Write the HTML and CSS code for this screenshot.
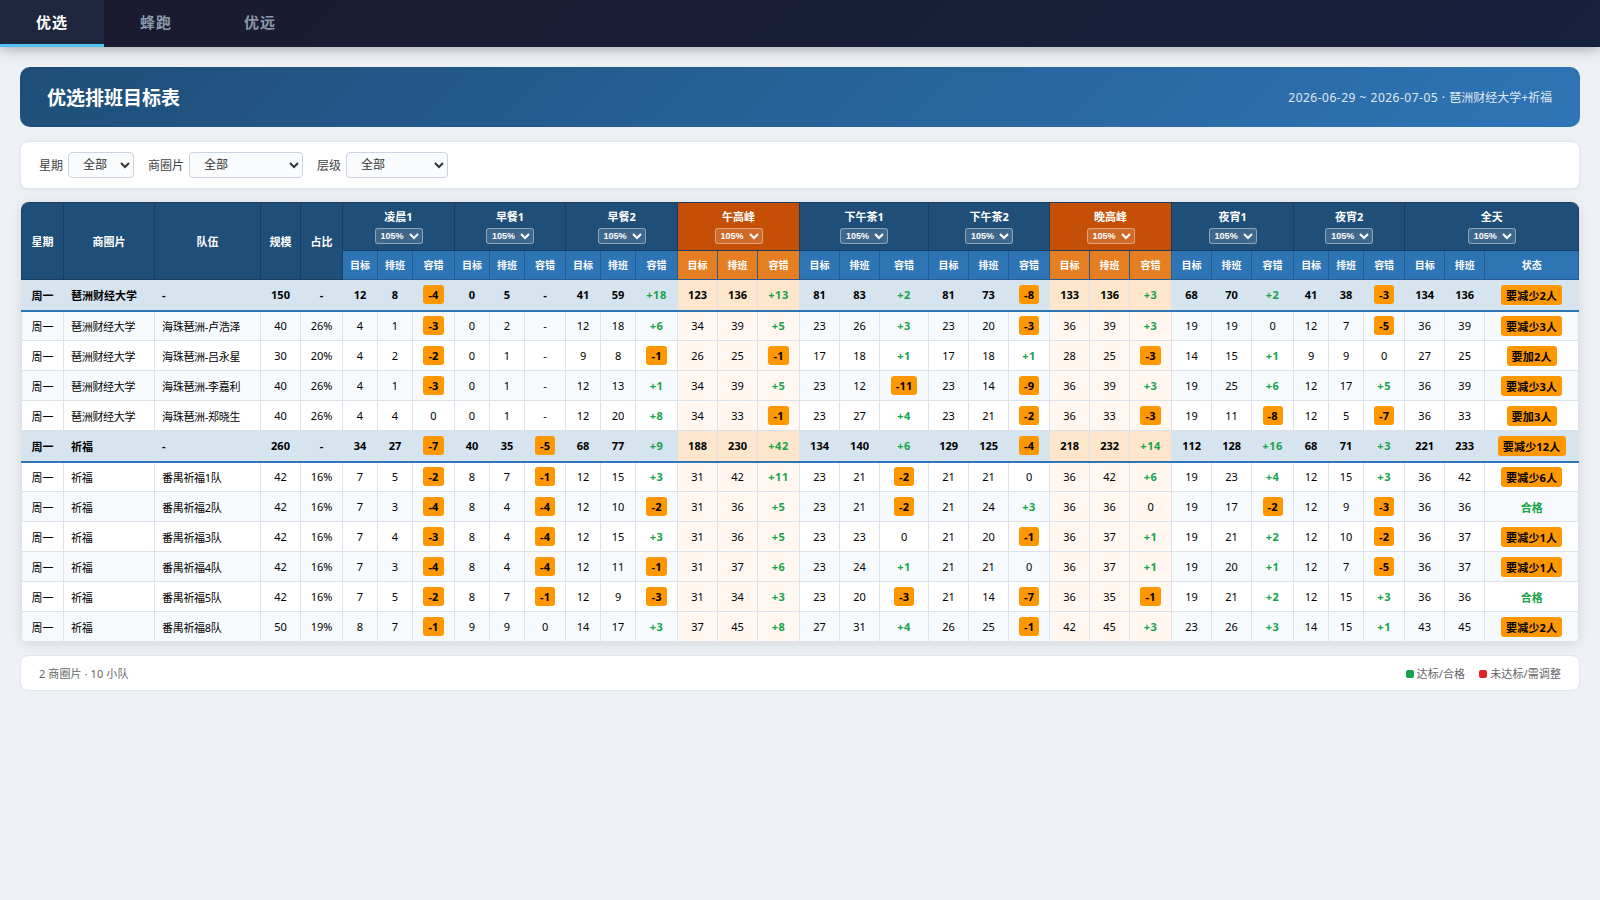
FILE: index.html
```html
<!DOCTYPE html>
<html lang="zh-CN">
<head>
    <meta charset="UTF-8">
    <meta name="viewport" content="width=device-width, initial-scale=1.0">
    <title>优选排班目标表</title>
    <link rel="stylesheet" href="styles.css">
</head>
<body>
    <nav class="tabs">
        <button class="tab active">优选</button>
        <button class="tab">蜂跑</button>
        <button class="tab">优远</button>
    </nav>

    <main class="page">
        <header class="header">
            <h1>优选排班目标表</h1>
            <div class="meta"><span class="dates">2026-06-29 ~ 2026-07-05 · </span>琶洲财经大学+祈福</div>
        </header>

        <div class="filters">
            <label>星期</label>
            <select class="f-day"><option>全部</option></select>
            <label>商圈片</label>
            <select class="f-area"><option>全部</option></select>
            <label>层级</label>
            <select class="f-level"><option>全部</option></select>
        </div>

        <div class="table-wrap">
            <table>
                <colgroup>
                    <col class="w42"><col class="w91"><col class="w106"><col class="w40"><col class="w42">
                    <col class="w35"><col class="w35"><col class="w42">
                    <col class="w35"><col class="w35"><col class="w41">
                    <col class="w35"><col class="w35"><col class="w42">
                    <col class="w40"><col class="w40"><col class="w42">
                    <col class="w40"><col class="w40"><col class="w49">
                    <col class="w40"><col class="w40"><col class="w41">
                    <col class="w40"><col class="w40"><col class="w42">
                    <col class="w40"><col class="w40"><col class="w42">
                    <col class="w35"><col class="w35"><col class="w41">
                    <col class="w40"><col class="w40"><col class="w94">
                </colgroup>
                <thead id="thead"></thead>
                <tbody id="tbody"></tbody>
            </table>
        </div>

        <footer class="footer">
            <span>2 商圈片 · 10 小队</span>
            <div class="legend">
                <span><i class="dot green"></i>达标/合格</span>
                <span><i class="dot red"></i>未达标/需调整</span>
            </div>
        </footer>
    </main>

    <script>
        const periods = ['凌晨1', '早餐1', '早餐2', '午高峰', '下午茶1', '下午茶2', '晚高峰', '夜宵1', '夜宵2', '全天'];
        const peaks = [3, 6];

        // 商圈片 | 队伍 | 规模 | 占比 | 各时段 目标 排班 容错
        const rows = [
            '琶洲财经大学|-|150|-|12 8 -4|0 5 -|41 59 +18|123 136 +13|81 83 +2|81 73 -8|133 136 +3|68 70 +2|41 38 -3|134 136 要减少2人',
            '琶洲财经大学|海珠琶洲-卢浩泽|40|26%|4 1 -3|0 2 -|12 18 +6|34 39 +5|23 26 +3|23 20 -3|36 39 +3|19 19 0|12 7 -5|36 39 要减少3人',
            '琶洲财经大学|海珠琶洲-吕永星|30|20%|4 2 -2|0 1 -|9 8 -1|26 25 -1|17 18 +1|17 18 +1|28 25 -3|14 15 +1|9 9 0|27 25 要加2人',
            '琶洲财经大学|海珠琶洲-李嘉利|40|26%|4 1 -3|0 1 -|12 13 +1|34 39 +5|23 12 -11|23 14 -9|36 39 +3|19 25 +6|12 17 +5|36 39 要减少3人',
            '琶洲财经大学|海珠琶洲-郑晓生|40|26%|4 4 0|0 1 -|12 20 +8|34 33 -1|23 27 +4|23 21 -2|36 33 -3|19 11 -8|12 5 -7|36 33 要加3人',
            '祈福|-|260|-|34 27 -7|40 35 -5|68 77 +9|188 230 +42|134 140 +6|129 125 -4|218 232 +14|112 128 +16|68 71 +3|221 233 要减少12人',
            '祈福|番禺祈福1队|42|16%|7 5 -2|8 7 -1|12 15 +3|31 42 +11|23 21 -2|21 21 0|36 42 +6|19 23 +4|12 15 +3|36 42 要减少6人',
            '祈福|番禺祈福2队|42|16%|7 3 -4|8 4 -4|12 10 -2|31 36 +5|23 21 -2|21 24 +3|36 36 0|19 17 -2|12 9 -3|36 36 合格',
            '祈福|番禺祈福3队|42|16%|7 4 -3|8 4 -4|12 15 +3|31 36 +5|23 23 0|21 20 -1|36 37 +1|19 21 +2|12 10 -2|36 37 要减少1人',
            '祈福|番禺祈福4队|42|16%|7 3 -4|8 4 -4|12 11 -1|31 37 +6|23 24 +1|21 21 0|36 37 +1|19 20 +1|12 7 -5|36 37 要减少1人',
            '祈福|番禺祈福5队|42|16%|7 5 -2|8 7 -1|12 9 -3|31 34 +3|23 20 -3|21 14 -7|36 35 -1|19 21 +2|12 15 +3|36 36 合格',
            '祈福|番禺祈福8队|50|19%|8 7 -1|9 9 0|14 17 +3|37 45 +8|27 31 +4|26 25 -1|42 45 +3|23 26 +3|14 15 +1|43 45 要减少2人'
        ];

        // 表头
        let top1 = '', top2 = '';
        ['星期', '商圈片', '队伍', '规模', '占比'].forEach(t => top1 += `<th rowspan="2" class="base">${t}</th>`);
        periods.forEach((p, i) => {
            const cls = peaks.includes(i) ? 'peak' : '';
            top1 += `<th colspan="3" class="${cls}">${p}<select class="rate"><option>105%</option></select></th>`;
            ['目标', '排班', i === 9 ? '状态' : '容错'].forEach(t => top2 += `<th class="${cls}">${t}</th>`);
        });
        document.getElementById('thead').innerHTML = `<tr class="row-top">${top1}</tr><tr class="row-sub">${top2}</tr>`;

        // 容错 / 状态
        function mark(v) {
            if (v === '0' || v === '-') return v;
            if (v === '合格') return `<span class="ok">${v}</span>`;
            if (v[0] === '+') return `<span class="ok plus">${v}</span>`;
            return `<span class="bad">${v}</span>`;
        }

        document.getElementById('tbody').innerHTML = rows.map(r => {
            const [area, team, size, pct, ...groups] = r.split('|');
            let html = `<td>周一</td><td class="left">${area}</td><td class="left">${team}</td><td>${size}</td><td>${pct}</td>`;
            groups.forEach((g, i) => {
                const cls = peaks.includes(i) ? 'peak' : '';
                const [a, b, c] = g.split(' ');
                html += `<td class="${cls}">${a}</td><td class="${cls}">${b}</td><td class="${cls}">${mark(c)}</td>`;
            });
            return `<tr class="${team === '-' ? 'summary' : ''}">${html}</tr>`;
        }).join('');
    </script>
</body>
</html>
```
FILE: styles.css
```css
* {
    margin: 0;
    padding: 0;
    box-sizing: border-box;
}
body {
    font-family: "Noto Sans", "Noto Sans CJK SC", sans-serif;
    background: #edf0f5;
    color: #000;
    font-size: 12px;
}
.tabs {
    display: flex;
    height: 47px;
    background: linear-gradient(135deg, #1a1a2e, #16213e);
    box-shadow: 0 2px 12px rgba(0, 0, 0, 0.3);
}
.tab {
    width: 104px;
    padding-bottom: 2px;
    border: none;
    border-bottom: 3px solid transparent;
    background: transparent;
    color: #8899aa;
    font-family: inherit;
    font-size: 15px;
    font-weight: 600;
    letter-spacing: 1px;
    cursor: pointer;
}
.tab.active {
    color: #fff;
    background: rgba(79, 195, 247, 0.08);
    border-bottom-color: #4fc3f7;
}
.page {
    padding: 20px;
}
.header {
    display: flex;
    align-items: center;
    justify-content: space-between;
    height: 60px;
    padding: 0 28px 0 27px;
    margin-bottom: 14px;
    border-radius: 10px;
    background: linear-gradient(135deg, #1f4e79, #2e75b6);
    color: #fff;
}
.header h1 {
    font-size: 19px;
    font-weight: 700;
}
.meta {
    font-size: 12px;
    opacity: 0.85;
}
.dates {
    letter-spacing: 0.5px;
}
.filters {
    display: flex;
    align-items: center;
    height: 48px;
    padding: 0 18px;
    margin-bottom: 13px;
    background: #fff;
    border: 1px solid #e2e6ef;
    border-radius: 8px;
    box-shadow: 0 1px 4px rgba(0, 0, 0, 0.05);
    color: #444;
}
.filters label {
    margin-right: 5px;
}
.filters select {
    height: 26px;
    margin-right: 14px;
    padding: 0 10px 1px;
    border: 1px solid #ccd2e0;
    border-radius: 4px;
    background: #fafbfd;
    color: #333;
    font-family: inherit;
    font-size: 12px;
}
.f-day { width: 66px; }
.f-area { width: 114px; }
.f-level { width: 102px; }

.table-wrap {
    margin: 0 1px 13px;
    border-radius: 8px;
    overflow: hidden;
    background: #fff;
    box-shadow: 0 2px 12px rgba(0, 0, 0, 0.1);
}
table {
    width: 1558px;
    table-layout: fixed;
    border-collapse: collapse;
    font-size: 11px;
}
.w35 { width: 35px; }
.w40 { width: 40px; }
.w41 { width: 41px; }
.w42 { width: 42px; }
.w49 { width: 49px; }
.w91 { width: 91px; }
.w94 { width: 94px; }
.w106 { width: 106px; }
th {
    background: #1f4e79;
    border: 1px solid #1a3d5f;
    color: #fff;
    font-weight: 700;
    line-height: 16px;
    white-space: nowrap;
}
th.base { padding-top: 2px; }
.row-top { height: 48px; }
.row-sub { height: 29px; }
.row-sub th {
    padding-bottom: 1px;
    background: #2e75b6;
    border-color: #235d93;
    font-size: 10px;
}
.row-top th.peak { background: #c55005; }
.row-sub th.peak { background: #e67e22; }
.rate {
    display: block;
    width: 48px;
    height: 16px;
    margin: 3px auto 0;
    padding: 0 0 0 1px;
    border: 1px solid rgba(255, 255, 255, 0.4);
    border-radius: 3px;
    background: rgba(255, 255, 255, 0.15);
    color: #fff;
    font-family: "Liberation Sans", Arial, sans-serif;
    font-size: 9px;
    font-weight: 600;
}
td {
    height: 30px;
    border: 1px solid #dce1ea;
    text-align: center;
    white-space: nowrap;
}
td.left {
    text-align: left;
    padding-left: 7px;
    letter-spacing: -0.3px;
}
tbody tr:nth-child(even) td { background: #f7fafd; }
tbody tr td.peak,
tbody tr:nth-child(even) td.peak { background: #fff7f0; }
tbody tr.summary td {
    height: 31px;
    background: #d6e4ef;
    border-bottom: 2px solid #2e75b6;
    font-weight: 700;
    letter-spacing: normal;
}
tbody tr.summary td.peak { background: #fde6cb; }
.ok {
    color: #16a34a;
    font-weight: 700;
}
.plus {
    letter-spacing: 0.6px;
}
.bad {
    display: inline-block;
    padding: 2px 5px;
    border-radius: 3px;
    background: #ff9800;
    color: #000;
    font-weight: 700;
    letter-spacing: 0.2px;
}
.footer {
    display: flex;
    align-items: center;
    justify-content: space-between;
    height: 36px;
    padding: 0 18px;
    background: #fff;
    border: 1px solid #e2e6ef;
    border-radius: 8px;
    color: #666;
    font-size: 11px;
    letter-spacing: 0.1px;
}
.legend {
    display: flex;
    gap: 14px;
}
.dot {
    display: inline-block;
    width: 8px;
    height: 8px;
    margin-right: 3px;
    border-radius: 2px;
}
.green { background: #16a34a; }
.red { background: #dc2626; }
```
